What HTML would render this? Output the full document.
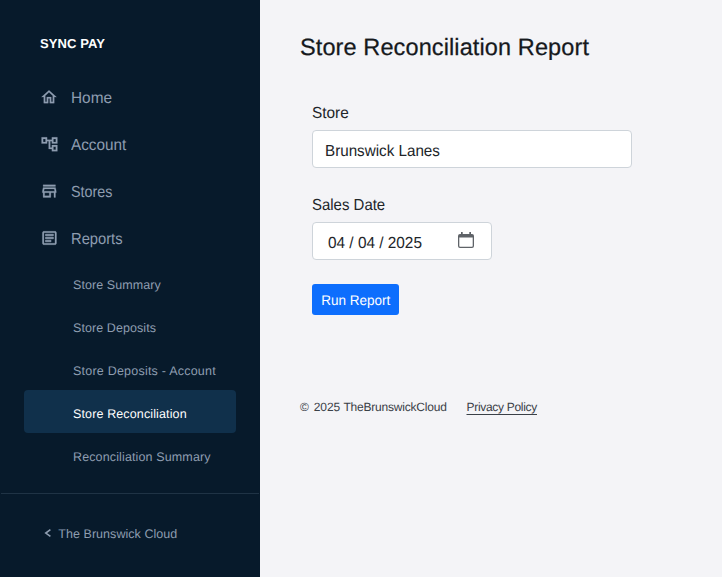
<!DOCTYPE html>
<html lang="en">
<head>
<meta charset="utf-8">
<title>Store Reconciliation Report</title>
<style>
*{box-sizing:border-box;margin:0;padding:0}
html,body{width:722px;height:577px;overflow:hidden}
body{text-rendering:geometricPrecision;font-family:"Liberation Sans",Arial,sans-serif;background:#f4f4f7;color:#212529;position:relative}
#side{position:absolute;left:0;top:0;width:260px;height:577px;background:#071a2b;color:#8e9db0}
#brand{position:absolute;left:40px;top:36px;font-weight:700;font-size:13px;line-height:16px;color:#fff;letter-spacing:.1px;white-space:nowrap}
.nav{position:absolute;left:0;width:260px;height:24px}
.nav svg{position:absolute;left:39.9px;top:2.7px;width:18.7px;height:18.4px;fill:#8e9db0;stroke:#8e9db0;stroke-width:.3px}
.nav span{position:absolute;left:71.3px;top:2px;font-size:16px;transform-origin:0 17px;line-height:24px;white-space:nowrap;color:#8e9db0}
.sub{position:absolute;left:73px;letter-spacing:.08px;font-size:12.5px;line-height:20px;white-space:nowrap;color:#8e9db0}
#active{position:absolute;left:24px;top:390px;width:212px;height:43px;background:#10304b;border-radius:4px}
.sub.on{color:#fff}
#div{position:absolute;left:1px;top:493px;width:258px;height:1px;background:#1f3345}
#back{position:absolute;left:58.3px;top:524px;letter-spacing:.05px;font-size:12.5px;line-height:20px;white-space:nowrap;color:#8e9db0}
#chev{position:absolute;left:42px;top:526px;width:14px;height:14px;fill:#8e9db0}
#main{position:absolute;left:260px;top:0;width:462px;height:577px}
h1{position:absolute;left:40px;top:32px;font-size:23.5px;letter-spacing:.11px;-webkit-text-stroke:.25px #16191d;line-height:30px;font-weight:400;color:#16191d;white-space:nowrap}
label{position:absolute;left:52px;transform-origin:0 50%;font-size:16px;line-height:24px;white-space:nowrap;color:#212529}
.inp{position:absolute;left:52px;height:38px;background:#fff;border:1px solid #ced4da;border-radius:4px;font-size:16px;line-height:24px;padding:9px 12px 3px 12px;white-space:nowrap;color:#212529}
.t{display:inline-block;transform-origin:0 50%}
#btn{position:absolute;left:52px;top:284px;width:87px;height:31px;background:#0d6efd;border-radius:3px;color:#fff;font-size:14px;line-height:33px;text-align:center;white-space:nowrap}
#foot{position:absolute;left:40px;top:398px;letter-spacing:-.09px;font-size:12px;line-height:18px;color:#3a4047;white-space:nowrap}
#pp{position:absolute;left:206.5px;top:398px;letter-spacing:-.3px;text-underline-offset:3px;font-size:12px;line-height:18px;color:#3a4047;text-decoration:underline;white-space:nowrap}
#cal{position:absolute;left:145px;top:9px;width:16px;height:16px}
</style>
</head>
<body>
<div id="side">
  <div id="brand">SYNC PAY</div>
  <div class="nav" style="top:85px"><svg viewBox="0 0 24 24" preserveAspectRatio="none" style="left:40.3px;top:2.7px;width:18px;height:18.2px"><path d="M12 5.69l5 4.5V18h-2v-6H9v6H7v-7.81l5-4.5M12 3L2 12h3v8h6v-6h2v6h6v-8h3L12 3z"/></svg><span style="transform:scaleX(.961)">Home</span></div>
  <div class="nav" style="top:132px"><svg viewBox="0 0 24 24" preserveAspectRatio="none" style="left:39.6px;top:2.67px;width:18.96px;height:18.67px"><path d="M22 11V3h-7v3H9V3H2v8h7V8h2v10h4v3h7v-8h-7v3h-2V8h2v3h7zM7 9H4V5h3v4zm10 6h3v4h-3v-4zm0-10h3v4h-3V5z"/></svg><span style="transform:scaleX(.956)">Account</span></div>
  <div class="nav" style="top:179px"><svg viewBox="0 0 24 24" preserveAspectRatio="none" style="left:39.7px;top:2.62px;width:18.6px;height:18.46px"><path d="M18.36 9l.6 3H5.04l.6-3h12.72M20 3.7H4v2h16V3.7zm0 3.3H4l-1 5v2h1v6h10v-6h4v6h2v-6h1v-2l-1-5zM6 18v-4h6v4H6z"/></svg><span style="transform:scaleX(.896)">Stores</span></div>
  <div class="nav" style="top:226px"><svg viewBox="0 0 24 24" preserveAspectRatio="none" style="left:39.85px;top:3px;width:18.9px;height:18px"><path d="M19 5v14H5V5h14m0-2H5c-1.1 0-2 .9-2 2v14c0 1.1.9 2 2 2h14c1.1 0 2-.9 2-2V5c0-1.100-.9-2-2-2z"/><path style="stroke-width:.8px" d="M14 17H7v-2h7v2zm3-4H7v-2h10v2zm0-4H7V7h10v2z"/></svg><span style="transform:scaleX(.92)">Reports</span></div>
  <div id="active"></div>
  <div class="sub" style="top:275px">Store Summary</div>
  <div class="sub" style="top:318px">Store Deposits</div>
  <div class="sub" style="top:361px;letter-spacing:.22px">Store Deposits - Account</div>
  <div class="sub on" style="top:404px;letter-spacing:.13px">Store Reconciliation</div>
  <div class="sub" style="top:447px;letter-spacing:.13px">Reconciliation Summary</div>
  <div id="div"></div>
  <svg id="chev" viewBox="0 0 14 14"><polyline points="8.4,3.7 3.8,7.050 8.4,10.4" fill="none" stroke="#8e9db0" stroke-width="1.650"/></svg>
  <div id="back">The Brunswick Cloud</div>
</div>
<div id="main">
  <h1>Store Reconciliation Report</h1>
  <label style="top:102px;transform:scaleX(.962)">Store</label>
  <div class="inp" style="top:130px;width:320px"><span class="t" style="transform:scaleX(.95)">Brunswick Lanes</span></div>
  <label style="top:194px;transform:scaleX(.935)">Sales Date</label>
  <div class="inp" style="top:222px;width:180px;padding-left:15px"><span class="t" style="transform:scaleX(.96)">04 / 04 / 2025</span>
    <svg id="cal" viewBox="0 0 16 16"><path fill="#5f6368" fill-rule="evenodd" d="M3 0h1.700v2.100h6.600V0H13v2.100h1a2 2 0 0 1 2 2V14a2 2 0 0 1-2 2H2a2 2 0 0 1-2-2V4.100a2 2 0 0 1 2-2h1z M1.300 5.400V14a.7.7 0 0 0 .7.700h12a.7.7 0 0 0 .7-.7V5.400z"/></svg>
  </div>
  <div id="btn"><span class="t" style="transform:scaleX(.965);transform-origin:50% 50%">Run Report</span></div>
  <div id="foot"><span style="letter-spacing:1.7px">©</span> 2025 <span style="letter-spacing:-.2px">TheBrunswickCloud</span></div>
  <div id="pp">Privacy Policy</div>
</div>
</body>
</html>
